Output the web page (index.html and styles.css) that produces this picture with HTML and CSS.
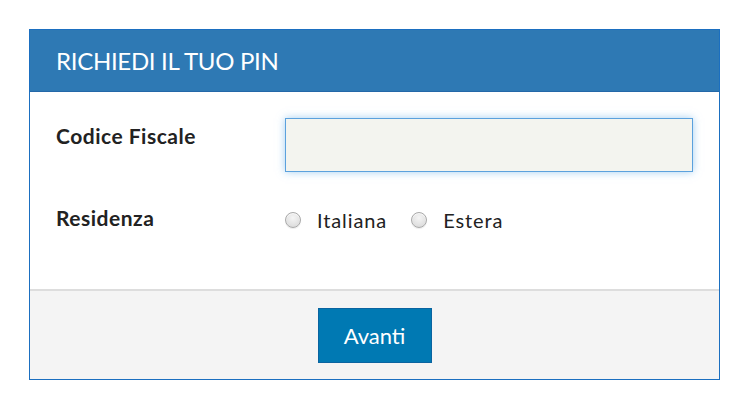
FILE: index.html
```html
<!DOCTYPE html>
<html lang="it">
<head>
<meta charset="utf-8">
<title>Richiedi il tuo PIN</title>
<link rel="stylesheet" href="styles.css">
</head>
<body>
<div class="panel">
  <div class="panel-head">RICHIEDI IL TUO PIN</div>
  <div class="panel-body">
    <div class="row row-cf">
      <label class="label" for="cf">Codice Fiscale</label>
      <input class="field" id="cf" type="text">
    </div>
    <div class="row row-res">
      <span class="label">Residenza</span>
      <div class="radios">
        <label class="radio"><span class="dot"></span>Italiana</label>
        <label class="radio"><span class="dot"></span>Estera</label>
      </div>
    </div>
  </div>
  <div class="panel-foot">
    <button class="btn" type="button">Avanti</button>
  </div>
</div>
</body>
</html>
```
FILE: styles.css
```css
html, body {
  margin: 0;
  padding: 0;
  background: #ffffff;
}
body {
  padding: 29px 30px 0 29px;
  font-family: "Lato", "Open Sans", sans-serif;
  color: #222;
}
.panel {
  width: 689px;
  border: 1px solid #1b6fc0;
  background: #fff;
}
.panel-head {
  background: #2e79b4;
  color: #fff;
  height: 62px;
  box-sizing: border-box;
  padding: 0 0 0 26px;
  display: flex;
  align-items: center;
  font-size: 24px;
  letter-spacing: -0.3px;
  border-bottom: 1px solid #2468a8;
}
.panel-body {
  padding: 26px 26px 0 26px;
  height: 197px;
  box-sizing: border-box;
}
.row {
  display: grid;
  grid-template-columns: 229px 1fr;
}
.label {
  font-weight: 700;
  font-size: 21px;
  letter-spacing: 0.5px;
  color: #222;
}
.row-cf .label {
  padding-top: 5px;
}
.field {
  height: 54px;
  box-sizing: border-box;
  border: 1px solid #5ba1dd;
  background: #f3f4ef;
  box-shadow: 0 0 8px rgba(102, 175, 233, 0.6);
  outline: none;
  margin: 0;
}
.row-res {
  margin-top: 31px;
  align-items: center;
}
.radios {
  display: flex;
  gap: 24px;
  font-size: 20px;
  letter-spacing: 0.9px;
  color: #222;
  padding-top: 5px;
}
.radio {
  display: flex;
  align-items: center;
  gap: 16px;
}
.dot {
  width: 14px;
  height: 14px;
  border-radius: 50%;
  border: 1px solid #aaa;
  background: radial-gradient(circle at 50% 35%, #f5f5f5, #d6d6d6);
  box-shadow: inset 0 1px 1px rgba(255,255,255,0.8), 0 1px 1px rgba(0,0,0,0.08);
}
.panel-foot {
  background: #f4f4f4;
  border-top: 2px solid #dddddd;
  height: 90px;
  box-sizing: border-box;
  display: flex;
  justify-content: center;
  padding-top: 17px;
}
.btn {
  width: 114px;
  height: 55px;
  background: #0079b3;
  border: 1px solid #0a64a0;
  color: #fff;
  font-family: "Lato", sans-serif;
  font-size: 22px;
  padding: 0;
  cursor: pointer;
}
```
